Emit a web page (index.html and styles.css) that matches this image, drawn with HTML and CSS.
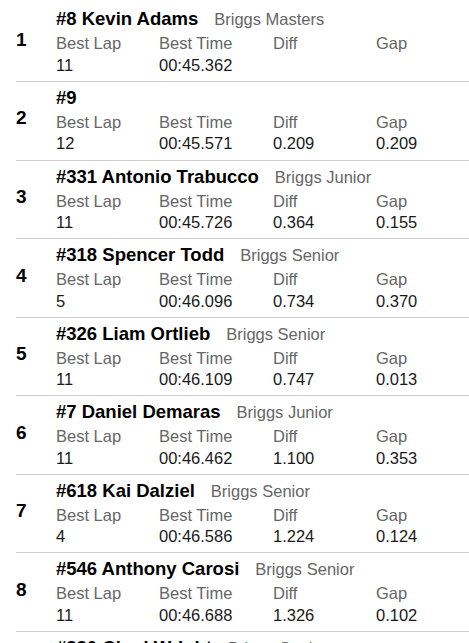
FILE: index.html
```html
<!DOCTYPE html>
<html>
<head>
<meta charset="utf-8">
<link rel="stylesheet" href="styles.css">
</head>
<body>
<div class="list">
  <div class="row">
    <div class="rank">1</div>
    <div class="info">
      <div class="name-line"><span class="name">#8 Kevin Adams</span><span class="cls">Briggs Masters</span></div>
      <div class="grid">
        <span class="lbl">Best Lap</span><span class="lbl">Best Time</span><span class="lbl">Diff</span><span class="lbl">Gap</span>
        <span class="val">11</span><span class="val">00:45.362</span><span class="val"></span><span class="val"></span>
      </div>
    </div>
  </div>
  <div class="row">
    <div class="rank">2</div>
    <div class="info">
      <div class="name-line"><span class="name">#9</span></div>
      <div class="grid">
        <span class="lbl">Best Lap</span><span class="lbl">Best Time</span><span class="lbl">Diff</span><span class="lbl">Gap</span>
        <span class="val">12</span><span class="val">00:45.571</span><span class="val">0.209</span><span class="val">0.209</span>
      </div>
    </div>
  </div>
  <div class="row">
    <div class="rank">3</div>
    <div class="info">
      <div class="name-line"><span class="name">#331 Antonio Trabucco</span><span class="cls">Briggs Junior</span></div>
      <div class="grid">
        <span class="lbl">Best Lap</span><span class="lbl">Best Time</span><span class="lbl">Diff</span><span class="lbl">Gap</span>
        <span class="val">11</span><span class="val">00:45.726</span><span class="val">0.364</span><span class="val">0.155</span>
      </div>
    </div>
  </div>
  <div class="row">
    <div class="rank">4</div>
    <div class="info">
      <div class="name-line"><span class="name">#318 Spencer Todd</span><span class="cls">Briggs Senior</span></div>
      <div class="grid">
        <span class="lbl">Best Lap</span><span class="lbl">Best Time</span><span class="lbl">Diff</span><span class="lbl">Gap</span>
        <span class="val">5</span><span class="val">00:46.096</span><span class="val">0.734</span><span class="val">0.370</span>
      </div>
    </div>
  </div>
  <div class="row">
    <div class="rank">5</div>
    <div class="info">
      <div class="name-line"><span class="name">#326 Liam Ortlieb</span><span class="cls">Briggs Senior</span></div>
      <div class="grid">
        <span class="lbl">Best Lap</span><span class="lbl">Best Time</span><span class="lbl">Diff</span><span class="lbl">Gap</span>
        <span class="val">11</span><span class="val">00:46.109</span><span class="val">0.747</span><span class="val">0.013</span>
      </div>
    </div>
  </div>
  <div class="row">
    <div class="rank">6</div>
    <div class="info">
      <div class="name-line"><span class="name">#7 Daniel Demaras</span><span class="cls">Briggs Junior</span></div>
      <div class="grid">
        <span class="lbl">Best Lap</span><span class="lbl">Best Time</span><span class="lbl">Diff</span><span class="lbl">Gap</span>
        <span class="val">11</span><span class="val">00:46.462</span><span class="val">1.100</span><span class="val">0.353</span>
      </div>
    </div>
  </div>
  <div class="row">
    <div class="rank">7</div>
    <div class="info">
      <div class="name-line"><span class="name">#618 Kai Dalziel</span><span class="cls">Briggs Senior</span></div>
      <div class="grid">
        <span class="lbl">Best Lap</span><span class="lbl">Best Time</span><span class="lbl">Diff</span><span class="lbl">Gap</span>
        <span class="val">4</span><span class="val">00:46.586</span><span class="val">1.224</span><span class="val">0.124</span>
      </div>
    </div>
  </div>
  <div class="row">
    <div class="rank">8</div>
    <div class="info">
      <div class="name-line"><span class="name">#546 Anthony Carosi</span><span class="cls">Briggs Senior</span></div>
      <div class="grid">
        <span class="lbl">Best Lap</span><span class="lbl">Best Time</span><span class="lbl">Diff</span><span class="lbl">Gap</span>
        <span class="val">11</span><span class="val">00:46.688</span><span class="val">1.326</span><span class="val">0.102</span>
      </div>
    </div>
  </div>
  <div class="row">
    <div class="rank">9</div>
    <div class="info">
      <div class="name-line"><span class="name">#330 Chad Wright</span><span class="cls">Briggs Senior</span></div>
      <div class="grid">
        <span class="lbl">Best Lap</span><span class="lbl">Best Time</span><span class="lbl">Diff</span><span class="lbl">Gap</span>
        <span class="val">10</span><span class="val">00:46.701</span><span class="val">1.339</span><span class="val">0.013</span>
      </div>
    </div>
  </div>
</div>
</body>
</html>
```

FILE: styles.css
```css
html, body {
  margin: 0;
  padding: 0;
  background: #fff;
  overflow: hidden;
}
body {
  font-family: "Liberation Sans", Arial, sans-serif;
  color: #000;
}
.list {
  padding-top: 3.4px;
  padding-left: 16px;
}
.row {
  display: flex;
  align-items: center;
  padding-top: 2px;
  padding-bottom: 4.57px;
  border-bottom: 1px solid #cfcfcf;
}
.rank {
  width: 40px;
  flex: none;
  font-weight: bold;
  font-size: 19px;
  line-height: 22px;
  padding-bottom: 2px;
}
.info {
  flex: 1;
}
.name-line {
  display: flex;
  align-items: baseline;
  height: 28px;
  line-height: 28px;
  font-size: 18.5px;
  white-space: nowrap;
}
.name {
  font-weight: bold;
}
.cls {
  font-size: 16.5px;
  color: #666;
  margin-left: 16px;
}
.grid {
  display: grid;
  grid-template-columns: 103px 114px 103px 1fr;
  font-size: 16.5px;
  line-height: 21.5px;
}
.lbl {
  color: #666;
}
.val {
  color: #1a1a1a;
  min-height: 21.5px;
}
```
